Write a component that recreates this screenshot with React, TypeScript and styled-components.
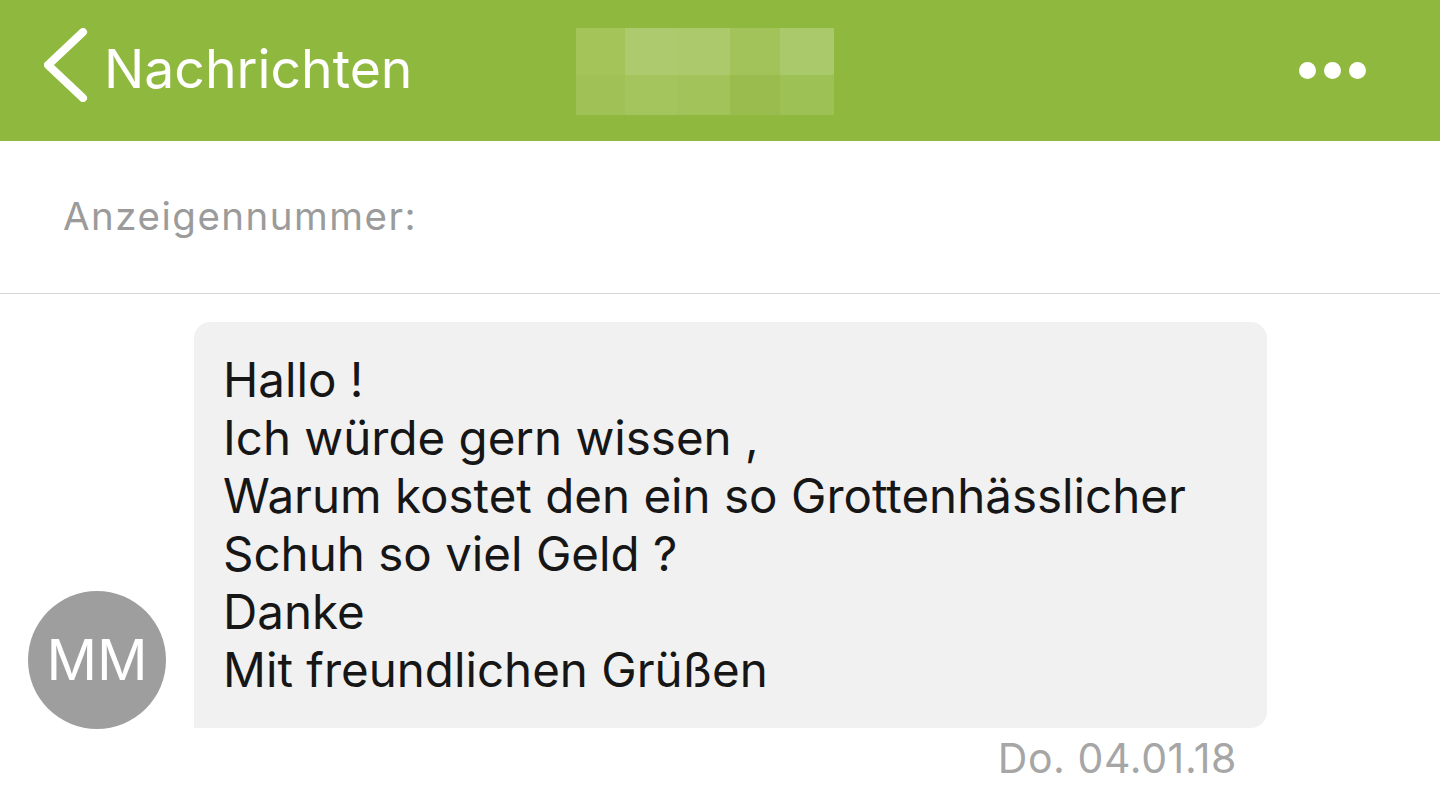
import React from "react";
import styled, { createGlobalStyle } from "styled-components";

const Global = createGlobalStyle`
  html, body { margin: 0; padding: 0; background: #ffffff; }
  body { font-family: Inter, "Noto Sans", sans-serif; -webkit-font-smoothing: antialiased; }
  * { box-sizing: border-box; }
`;

const Page = styled.div`
  width: 1440px;
  height: 810px;
  overflow: hidden;
  background: #ffffff;
  display: flex;
  flex-direction: column;
`;

const Header = styled.header`
  height: 141px;
  flex-shrink: 0;
  background: #8fb83f;
  display: flex;
  align-items: center;
  padding: 0 74px 0 44px;
  position: relative;
`;

const Back = styled.div`
  display: flex;
  align-items: center;
  gap: 16px;
  color: #ffffff;
  font-size: 53.5px;
  font-weight: 400;
`;

const Chevron = styled.svg`
  margin-top: -11px;
  flex-shrink: 0;
`;

const BackLabel = styled.span`
  line-height: 1;
  margin-top: -4px;
`;

const Pixelated = styled.div`
  position: absolute;
  left: 576px;
  top: 28px;
  display: grid;
  grid-template-columns: 49px 52px 53px 50px 54px;
  grid-template-rows: 47px 40px;
`;

const Cell = styled.div<{ $c: string }>`
  background: ${(p) => p.$c};
`;

const Spacer = styled.div`
  flex: 1;
`;

const Dots = styled.div`
  display: flex;
  gap: 8px;
  align-items: center;
`;

const Dot = styled.span`
  width: 17px;
  height: 17px;
  border-radius: 50%;
  background: #ffffff;
`;

const InfoBar = styled.div`
  height: 153px;
  flex-shrink: 0;
  border-bottom: 1px solid #d6d6d6;
  padding: 52px 0 0 63px;
  color: #9b9b9b;
  font-size: 38.5px;
  letter-spacing: 1.5px;
  line-height: 1.2;
`;

const Thread = styled.div`
  display: flex;
  flex-direction: column;
  padding: 28px 0 0 28px;
`;

const MessageRow = styled.div`
  display: flex;
  align-items: flex-end;
  gap: 28px;
`;

const Avatar = styled.div`
  width: 138px;
  height: 138px;
  border-radius: 50%;
  background: #9e9e9e;
  color: #ffffff;
  font-size: 56px;
  display: flex;
  align-items: center;
  justify-content: center;
  margin-bottom: -1px;
  flex-shrink: 0;
`;

const Bubble = styled.div`
  width: 1073px;
  background: #f1f1f1;
  border-radius: 16px 16px 16px 0;
  padding: 29px 30px 29px 29px;
  color: #161616;
  font-size: 47.5px;
  line-height: 58px;
`;

const Line = styled.div`
  white-space: nowrap;
`;

const Meta = styled.div`
  width: 1209px;
  text-align: right;
  color: #a6a6a6;
  font-size: 41px;
  letter-spacing: 0.6px;
  line-height: 1;
  padding-top: 10px;
`;

const cellsTop = ["#a4c45a", "#adcb6e", "#acca6c", "#a2c35a", "#a9c96a"];
const cellsBottom = ["#9fc156", "#a4c45e", "#a2c35a", "#9abc4f", "#9ec156"];

const lines = [
  "Hallo !",
  "Ich würde gern wissen ,",
  "Warum kostet den ein so Grottenhässlicher",
  "Schuh so viel Geld ?",
  "Danke",
  "Mit freundlichen Grüßen",
];

export default function App() {
  return (
    <Page>
      <Global />
      <Header>
        <Back>
          <Chevron width="44" height="74" viewBox="0 0 44 74" fill="none">
            <path d="M39 4 L4 37 L39 70" stroke="#ffffff" strokeWidth="8" strokeLinecap="round" strokeLinejoin="round" />
          </Chevron>
          <BackLabel>Nachrichten</BackLabel>
        </Back>
        <Pixelated>
          {cellsTop.map((c, i) => (
            <Cell key={"t" + i} $c={c} />
          ))}
          {cellsBottom.map((c, i) => (
            <Cell key={"b" + i} $c={c} />
          ))}
        </Pixelated>
        <Spacer />
        <Dots>
          <Dot />
          <Dot />
          <Dot />
        </Dots>
      </Header>
      <InfoBar>Anzeigennummer:</InfoBar>
      <Thread>
        <MessageRow>
          <Avatar>MM</Avatar>
          <Bubble>
            {lines.map((l) => (
              <Line key={l}>{l}</Line>
            ))}
          </Bubble>
        </MessageRow>
        <Meta>Do. 04.01.18</Meta>
      </Thread>
    </Page>
  );
}
